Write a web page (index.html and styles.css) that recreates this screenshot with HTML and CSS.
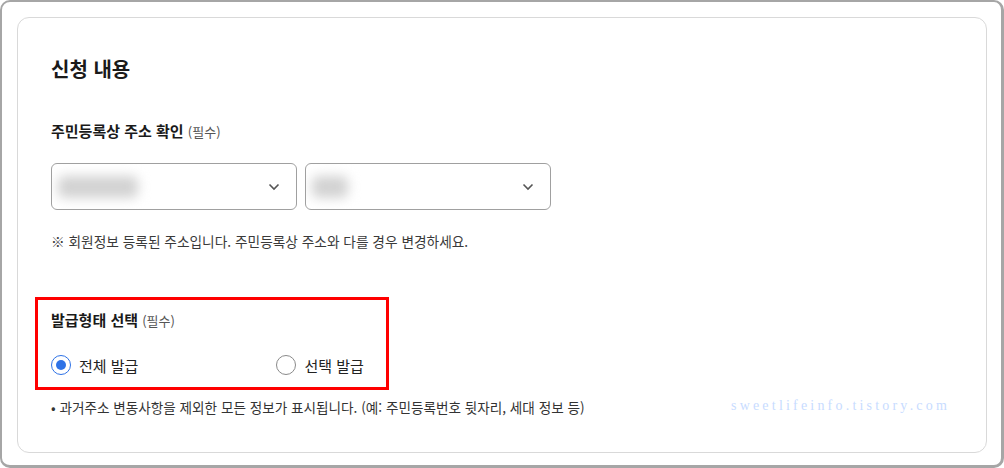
FILE: index.html
```html
<!DOCTYPE html>
<html lang="ko">
<head>
  <meta charset="UTF-8" />
  <title>신청 내용</title>
  <link rel="stylesheet" href="styles.css">
</head>
<body>
  <div class="frame">
    <section class="card">
      <h2>신청 내용</h2>

      <p class="field-label">주민등록상 주소 확인 <span class="req">(필수)</span></p>
      <div class="select-row">
        <div class="select">
          <span class="blur blur-wide"></span>
          <svg class="chev" width="12" height="8" viewBox="0 0 12 8"><path d="M1.5 1.5 L6 6 L10.5 1.5" fill="none" stroke="#555" stroke-width="1.6"/></svg>
        </div>
        <div class="select">
          <span class="blur blur-short"></span>
          <svg class="chev" width="12" height="8" viewBox="0 0 12 8"><path d="M1.5 1.5 L6 6 L10.5 1.5" fill="none" stroke="#555" stroke-width="1.6"/></svg>
        </div>
      </div>
      <p class="note">※ 회원정보 등록된 주소입니다. 주민등록상 주소와 다를 경우 변경하세요.</p>

      <div class="highlight">
        <p class="field-label">발급형태 선택 <span class="req">(필수)</span></p>
        <div class="radio-row">
          <label class="radio"><span class="dot checked"></span>전체 발급</label>
          <label class="radio"><span class="dot"></span>선택 발급</label>
        </div>
      </div>
      <p class="bullet">• 과거주소 변동사항을 제외한 모든 정보가 표시됩니다. (예: 주민등록번호 뒷자리, 세대 정보 등)</p>

      <span class="watermark">sweetlifeinfo.tistory.com</span>
    </section>
  </div>
</body>
</html>
```

FILE: styles.css
```css
body {
  margin: 0;
  font-family: "Noto Sans CJK KR", "Noto Sans", sans-serif;
  color: #222;
  background: #fff;
}

.frame {
  width: 1004px;
  height: 468px;
  box-sizing: border-box;
  border: 2px solid #a6a6a6;
  border-right-width: 3px;
  border-bottom-width: 3px;
  border-radius: 10px;
  padding: 15px 14px 0 15px;
  background: #fff;
}

.card {
  position: relative;
  height: 436px;
  box-sizing: border-box;
  border: 1px solid #d9d9d9;
  border-radius: 12px;
  padding: 37px 33px 0;
}

h2 {
  margin: 0;
  font-size: 20px;
  line-height: 28px;
  font-weight: 700;
  color: #1a1a1a;
}

.field-label {
  margin: 37px 0 0;
  font-size: 15px;
  line-height: 22px;
  font-weight: 700;
  color: #1a1a1a;
}

.req {
  font-size: 13px;
  font-weight: 400;
  color: #555;
}

.select-row {
  display: flex;
  gap: 8px;
  margin-top: 20px;
}

.select {
  position: relative;
  width: 246px;
  height: 47px;
  box-sizing: border-box;
  border: 1px solid #a0a0a0;
  border-radius: 6px;
  display: flex;
  align-items: center;
  justify-content: space-between;
  padding: 0 16px 0 6px;
  overflow: hidden;
}

.blur {
  height: 22px;
  background: #d2d2d2;
  filter: blur(6px);
  border-radius: 6px;
}

.blur-wide {
  width: 80px;
}

.blur-short {
  width: 36px;
}

.note {
  margin: 21px 0 0;
  font-size: 13.7px;
  line-height: 20px;
  color: #3a3a3a;
}

.highlight {
  margin: 46px 0 0 -16px;
  width: 354px;
  box-sizing: border-box;
  border: 3px solid #f00;
  padding: 9px 13px 10px;
}

.highlight .field-label {
  margin-top: 0;
}

.radio-row {
  display: flex;
  gap: 138px;
  margin-top: 21px;
  height: 24px;
  align-items: center;
}

.radio {
  display: flex;
  align-items: center;
  gap: 8px;
  font-size: 15px;
  color: #222;
}

.dot {
  width: 20px;
  height: 20px;
  box-sizing: border-box;
  border: 1px solid #8a8a8a;
  border-radius: 50%;
  display: inline-flex;
  align-items: center;
  justify-content: center;
}

.dot.checked {
  border-color: #2e72e6;
}

.dot.checked::after {
  content: "";
  width: 10px;
  height: 10px;
  border-radius: 50%;
  background: #2e72e6;
}

.bullet {
  margin: 7px 0 0;
  font-size: 13.6px;
  line-height: 20px;
  color: #333;
}

.watermark {
  position: absolute;
  left: 713px;
  top: 380px;
  font-family: "Liberation Serif", serif;
  font-size: 14px;
  letter-spacing: 3.2px;
  color: #c8dcff;
}
```
